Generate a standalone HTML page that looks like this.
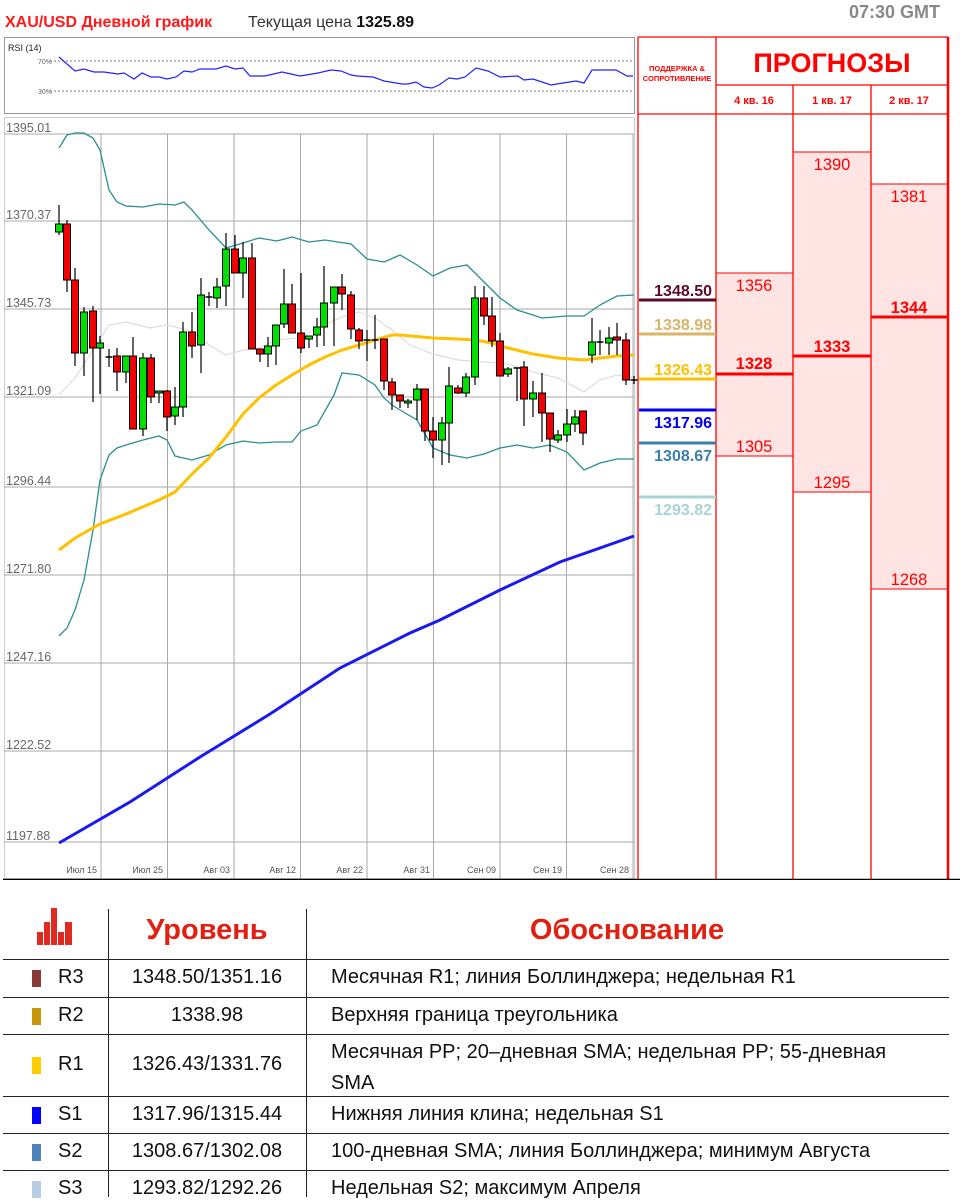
<!DOCTYPE html>
<html><head><meta charset="utf-8"><style>
body{margin:0;width:960px;height:1197px;background:#fff;position:relative;overflow:hidden;font-family:"Liberation Sans",sans-serif}
.a{position:absolute}
.t{position:absolute;font-size:20px;color:#111;white-space:nowrap}
.hl{position:absolute;left:3px;width:946px;height:1px;background:#222}
.vl{position:absolute;width:1px;background:#222;top:909px;height:288px}
.sw{position:absolute;left:32px;width:9px;height:17px}
</style></head><body>
<svg class="a" style="left:0;top:0" width="960" height="880" xmlns="http://www.w3.org/2000/svg" font-family="Liberation Sans, sans-serif">
<text x="5" y="27" font-size="16" font-weight="bold" fill="#ff1a1a">XAU/USD Дневной график</text>
<text x="248" y="27" font-size="16" fill="#333">Текущая цена <tspan font-weight="bold" fill="#111">1325.89</tspan></text>
<text x="940" y="18" font-size="18" font-weight="bold" fill="#888" text-anchor="end">07:30 GMT</text>
<rect x="4.5" y="37.5" width="630" height="76" fill="#fff" stroke="#999"/>
<text x="8" y="51" font-size="9" fill="#222">RSI (14)</text>
<line x1="50" y1="61" x2="634" y2="61" stroke="#777" stroke-dasharray="2,2"/>
<line x1="50" y1="91" x2="634" y2="91" stroke="#777" stroke-dasharray="2,2"/>
<text x="38" y="64" font-size="7" fill="#666">70%</text>
<text x="38" y="94" font-size="7" fill="#666">30%</text>
<polyline fill="none" stroke="#2222ff" stroke-width="1.2" points="59,57 75,71 84,69 94,72 104,72 118,74 124,73 134,79 142,73 151,77 159,77 167,79 176,77 184,71 192,72 200,69 216,69 226,66 235,69 243,68 250,76 265,76 282,72 300,76 318,73 331,70 341,71 351,75 357,76 373,77 384,81 402,84 408,84 416,82 424,87 432,88 439,85 449,78 457,79 465,77 476,68 488,71 500,77 518,76 524,80 533,79 551,85 563,83 576,81 584,83 592,70 616,70 627,76 633,76"/>
<rect x="4.5" y="117.5" width="630" height="761" fill="#fff" stroke="#ccc"/>
<g stroke="#aaa" stroke-width="1">
<line x1="4" y1="134" x2="634" y2="134"/><line x1="4" y1="221" x2="634" y2="221"/><line x1="4" y1="309" x2="634" y2="309"/><line x1="4" y1="397" x2="634" y2="397"/><line x1="4" y1="487" x2="634" y2="487"/><line x1="4" y1="575" x2="634" y2="575"/><line x1="4" y1="663" x2="634" y2="663"/><line x1="4" y1="751" x2="634" y2="751"/><line x1="4" y1="842" x2="634" y2="842"/>
<line x1="101" y1="134" x2="101" y2="879"/><line x1="167.5" y1="134" x2="167.5" y2="879"/><line x1="234" y1="134" x2="234" y2="879"/><line x1="300.5" y1="134" x2="300.5" y2="879"/><line x1="367" y1="134" x2="367" y2="879"/><line x1="433.5" y1="134" x2="433.5" y2="879"/><line x1="500" y1="134" x2="500" y2="879"/><line x1="566.5" y1="134" x2="566.5" y2="879"/><line x1="633" y1="134" x2="633" y2="879"/>
</g>
<g font-size="12.5" fill="#666">
<text x="6" y="132">1395.01</text><text x="6" y="219">1370.37</text><text x="6" y="307">1345.73</text><text x="6" y="395">1321.09</text><text x="6" y="485">1296.44</text><text x="6" y="573">1271.80</text><text x="6" y="661">1247.16</text><text x="6" y="749">1222.52</text><text x="6" y="840">1197.88</text>
</g>
<g font-size="9" fill="#555" text-anchor="end">
<text x="97" y="873">Июл 15</text><text x="163" y="873">Июл 25</text><text x="230" y="873">Авг 03</text><text x="296" y="873">Авг 12</text><text x="363" y="873">Авг 22</text><text x="430" y="873">Авг 31</text><text x="496" y="873">Сен 09</text><text x="562" y="873">Сен 19</text><text x="629" y="873">Сен 28</text>
</g>
<polyline fill="none" stroke="#ddd" stroke-width="1.2" points="59,395 75,378 109,325 126,322 150,328 167,325 192,331 209,345 226,355 243,350 259,348 276,340 300,338 317,328 342,317 359,312 375,318 392,330 410,345 433,354 458,360 484,362 508,364 533,372 558,378 584,392 600,380 617,375 634,378"/>
<polyline fill="none" stroke="#2a8f8f" stroke-width="1.3" points="59,148 67,135 75,133 84,133 93,138 100,150 109,190 117,202 126,206 143,207 159,204 175,205 184,202 192,210 209,230 226,248 243,243 259,238 277,241 292,237 309,242 325,240 351,244 367,259 384,262 400,255 417,265 433,276 450,268 467,265 484,282 500,298 517,310 533,315 542,318 567,316 584,316 600,305 617,296 634,295"/>
<polyline fill="none" stroke="#2a8f8f" stroke-width="1.3" points="59,636 67,628 75,610 84,580 93,530 100,480 109,455 117,448 126,445 143,440 159,436 167,440 175,456 192,460 209,455 226,445 243,441 259,443 276,442 292,442 301,431 317,425 334,395 342,373 359,375 375,385 384,398 392,405 400,410 417,420 433,448 450,455 467,458 484,454 500,448 517,445 533,448 550,445 567,452 584,470 600,463 617,459 634,459"/>
<polyline fill="none" stroke="#ffc000" stroke-width="3" points="59,550 75,538 100,524 126,514 159,500 175,492 192,474 209,458 226,437 243,414 259,398 276,385 292,375 309,365 325,357 342,350 359,345 375,340 392,335 400,335 433,338 458,339 475,340 492,343 508,348 533,354 558,358 584,360 600,358 617,356 634,355"/>
<polyline fill="none" stroke="#1a1aee" stroke-width="3" points="59,843 130,802 200,757 270,714 340,668 410,633 440,620 500,590 560,562 600,548 634,536"/>
<g id="cd"></g>
<rect x="716" y="273" width="77" height="183" fill="#ffe4e4" stroke="#f00"/>
<rect x="793" y="152" width="78" height="340" fill="#ffe4e4" stroke="#f00"/>
<rect x="871" y="184" width="77" height="405" fill="#ffe4e4" stroke="#f00"/>
<g stroke="#f00" stroke-width="1.3">
<line x1="638" y1="37" x2="948" y2="37"/><line x1="638" y1="37" x2="638" y2="879"/><line x1="716" y1="37" x2="716" y2="879"/>
<line x1="793" y1="85" x2="793" y2="879"/><line x1="871" y1="85" x2="871" y2="879"/>
<line x1="716" y1="85" x2="948" y2="85"/><line x1="638" y1="114" x2="948" y2="114"/>
</g>
<line x1="948" y1="37" x2="948" y2="879" stroke="#f00" stroke-width="2.5"/>
<text x="832" y="72" font-size="27" font-weight="bold" fill="#f00" text-anchor="middle">ПРОГНОЗЫ</text>
<text x="677" y="71" font-size="7.5" font-weight="bold" fill="#f00" text-anchor="middle">ПОДДЕРЖКА &amp;</text>
<text x="677" y="81" font-size="7.5" font-weight="bold" fill="#f00" text-anchor="middle">СОПРОТИВЛЕНИЕ</text>
<g font-size="11" font-weight="bold" fill="#f00" text-anchor="middle">
<text x="754" y="104">4 кв. 16</text><text x="832" y="104">1 кв. 17</text><text x="909" y="104">2 кв. 17</text></g>
<g stroke="#f00" stroke-width="3"><line x1="716" y1="374" x2="793" y2="374"/><line x1="793" y1="356" x2="871" y2="356"/><line x1="871" y1="317" x2="948" y2="317"/></g>
<g font-size="16.5" fill="#f00" text-anchor="middle">
<text x="754" y="291">1356</text><text x="754" y="369" font-weight="bold">1328</text><text x="754" y="452">1305</text>
<text x="832" y="170">1390</text><text x="832" y="352" font-weight="bold">1333</text><text x="832" y="488">1295</text>
<text x="909" y="202">1381</text><text x="909" y="313" font-weight="bold">1344</text><text x="909" y="585">1268</text></g>
<g stroke-width="3"><line x1="639" y1="300" x2="716" y2="300" stroke="#5a0a2a"/><line x1="639" y1="334" x2="716" y2="334" stroke="#d9b56a"/><line x1="639" y1="379" x2="716" y2="379" stroke="#ffc000"/><line x1="639" y1="410" x2="716" y2="410" stroke="#0000ee"/><line x1="639" y1="443" x2="716" y2="443" stroke="#3a7fa8"/><line x1="639" y1="497" x2="716" y2="497" stroke="#a8d4d4"/></g>
<g font-size="16" font-weight="bold" text-anchor="end">
<text x="712" y="296" fill="#5a0a2a">1348.50</text><text x="712" y="330" fill="#d9b56a">1338.98</text><text x="712" y="375" fill="#ffc000">1326.43</text><text x="712" y="428" fill="#0000ee">1317.96</text><text x="712" y="461" fill="#3a7fa8">1308.67</text><text x="712" y="515" fill="#a8d4d4">1293.82</text></g>
<line x1="3" y1="879.5" x2="960" y2="879.5" stroke="#000" stroke-width="1.5"/>
</svg>
<script>
var d=[[59,224,232,205,235,'g'],[67,224,280,220,292,'r'],[75,280,353,268,366,'r'],[84,312,353,307,376,'g'],[93,311,348,306,402,'r'],[100,343,348,336,394,'g'],[109,357,357,349,367,'d'],[117,356,372,348,391,'r'],[126,356,372,356,383,'g'],[133,356,429,337,429,'r'],[143,358,429,353,436,'g'],[151,358,397,354,403,'r'],[159,391,393,391,403,'g'],[167,391,417,390,431,'r'],[175,407,416,387,425,'g'],[183,332,407,322,417,'g'],[192,332,346,312,358,'r'],[201,295,345,278,373,'g'],[209,297,297,292,306,'d'],[217,287,298,278,308,'g'],[226,249,286,233,306,'g'],[235,249,273,235,273,'r'],[243,258,273,242,298,'g'],[252,258,349,243,349,'r'],[260,349,354,349,362,'r'],[268,346,354,337,367,'g'],[276,325,346,325,365,'g'],[284,304,324,269,328,'g'],[292,304,333,284,333,'r'],[301,333,348,273,353,'r'],[309,336,339,336,348,'g'],[317,327,335,318,347,'g'],[324,303,327,266,346,'g'],[334,287,303,287,346,'g'],[342,287,294,274,310,'r'],[351,295,329,291,339,'r'],[359,330,341,328,349,'r'],[367,340,340,330,361,'d'],[375,340,340,315,349,'d'],[384,339,381,339,390,'r'],[392,382,395,378,410,'r'],[400,395,401,395,408,'r'],[408,401,403,399,408,'g'],[417,389,400,384,420,'g'],[425,389,431,389,441,'r'],[433,431,440,417,458,'r'],[442,423,440,417,465,'g'],[449,386,423,367,463,'g'],[458,388,393,385,394,'r'],[466,377,393,373,397,'g'],[475,298,377,286,385,'g'],[484,298,316,286,325,'r'],[492,316,341,297,347,'r'],[500,341,376,333,376,'r'],[508,369,374,367,377,'g'],[517,368,368,368,401,'d'],[524,367,399,361,426,'r'],[533,393,399,381,417,'g'],[542,393,413,373,442,'r'],[550,413,439,413,452,'r'],[558,435,440,430,443,'g'],[567,424,435,409,442,'g'],[575,417,424,410,432,'g'],[583,411,433,411,445,'r'],[592,342,355,318,363,'g'],[600,342,342,330,355,'d'],[609,338,343,327,355,'g'],[617,337,340,323,355,'r'],[626,340,380,333,385,'r'],[634,380,380,376,384,'d']];
var s='';d.forEach(function(c){s+='<line x1="'+c[0]+'" y1="'+c[3]+'" x2="'+c[0]+'" y2="'+c[4]+'" stroke="#000" stroke-width="1.2"/>';
if(c[5]=='d'){s+='<line x1="'+(c[0]-3.5)+'" y1="'+c[1]+'" x2="'+(c[0]+3.5)+'" y2="'+c[1]+'" stroke="#000" stroke-width="1.5"/>';}
else{var h=Math.max(c[2]-c[1],2);s+='<rect x="'+(c[0]-3.5)+'" y="'+c[1]+'" width="7" height="'+h+'" fill="'+(c[5]=='g'?'#00e000':'#f00000')+'" stroke="#000" stroke-width="1"/>';}});
document.getElementById('cd').innerHTML=s;
</script>
<svg class="a" style="left:37px;top:908px" width="36" height="38"><g fill="#e02a20"><rect x="0" y="24" width="6" height="13"/><rect x="7" y="14" width="6" height="23"/><rect x="14" y="0" width="6" height="37"/><rect x="21" y="24" width="6" height="13"/><rect x="28" y="14" width="7" height="23"/></g></svg>
<div class="t" style="left:108px;width:198px;top:914px;text-align:center;font-size:29px;font-weight:bold;color:#e02010">Уровень</div>
<div class="t" style="left:306px;width:642px;top:914px;text-align:center;font-size:29px;font-weight:bold;color:#e02010">Обоснование</div>
<div class="vl" style="left:108px"></div><div class="vl" style="left:306px"></div>
<div class="hl" style="top:959px"></div><div class="hl" style="top:997px"></div><div class="hl" style="top:1034px"></div><div class="hl" style="top:1096px"></div><div class="hl" style="top:1133px"></div><div class="hl" style="top:1170px"></div>
<div class="sw" style="top:970px;background:#8b3a3a"></div><div class="t" style="left:58px;top:966px">R3</div><div class="t" style="left:108px;width:198px;text-align:center;top:966px">1348.50/1351.16</div><div class="t" style="left:331px;top:966px">Месячная R1; линия Боллинджера; недельная R1</div>
<div class="sw" style="top:1008px;background:#c8960a"></div><div class="t" style="left:58px;top:1004px">R2</div><div class="t" style="left:108px;width:198px;text-align:center;top:1004px">1338.98</div><div class="t" style="left:331px;top:1004px">Верхняя граница треугольника</div>
<div class="sw" style="top:1057px;background:#ffcc00"></div><div class="t" style="left:58px;top:1053px">R1</div><div class="t" style="left:108px;width:198px;text-align:center;top:1053px">1326.43/1331.76</div><div class="t" style="left:331px;top:1037px;line-height:31px">Месячная PP; 20–дневная SMA; недельная PP; 55-дневная<br>SMA</div>
<div class="sw" style="top:1107px;background:#0000ff"></div><div class="t" style="left:58px;top:1103px">S1</div><div class="t" style="left:108px;width:198px;text-align:center;top:1103px">1317.96/1315.44</div><div class="t" style="left:331px;top:1103px">Нижняя линия клина; недельная S1</div>
<div class="sw" style="top:1144px;background:#4f81bd"></div><div class="t" style="left:58px;top:1140px">S2</div><div class="t" style="left:108px;width:198px;text-align:center;top:1140px">1308.67/1302.08</div><div class="t" style="left:331px;top:1140px">100-дневная SMA; линия Боллинджера; минимум Августа</div>
<div class="sw" style="top:1181px;background:#b8cce4"></div><div class="t" style="left:58px;top:1177px">S3</div><div class="t" style="left:108px;width:198px;text-align:center;top:1177px">1293.82/1292.26</div><div class="t" style="left:331px;top:1177px">Недельная S2; максимум Апреля</div>
</body></html>
